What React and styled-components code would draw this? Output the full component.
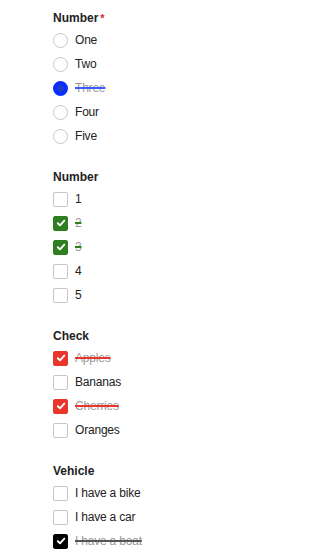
import React from 'react';
import styled, { createGlobalStyle } from 'styled-components';

const GlobalStyle = createGlobalStyle`
  body {
    margin: 0;
    background: #fff;
    font-family: "Liberation Sans", Arial, sans-serif;
    color: #222;
  }
`;

const Page = styled.div`
  padding: 10px 0 0 53px;
  display: flex;
  flex-direction: column;
  gap: 21px;
`;

const Group = styled.fieldset`
  border: none;
  margin: 0;
  padding: 0;
  display: flex;
  flex-direction: column;
`;

const Legend = styled.div`
  font-size: 12px;
  font-weight: 700;
  line-height: 16px;
  color: #222;
  margin-bottom: 2px;
  display: flex;
  align-items: flex-start;
  gap: 2px;
`;

const Required = styled.span`
  color: #e02424;
  font-size: 11px;
  font-weight: 700;
  line-height: 12px;
  margin-top: 2px;
`;

const Row = styled.label`
  height: 24px;
  display: flex;
  align-items: center;
  gap: 7px;
  font-size: 12px;
  letter-spacing: -0.2px;
  color: #222;
`;

const Text = styled.span`
  ${({ $strike, $line }) =>
    $strike &&
    `
    color: #999;
    text-decoration: line-through;
    text-decoration-color: ${$line};
    text-decoration-thickness: 1.5px;
  `}
`;

const Radio = styled.span`
  box-sizing: border-box;
  width: 15px;
  height: 15px;
  border-radius: 50%;
  flex: none;
  border: ${({ $on }) => ($on ? '4px solid #0a2dff' : '1px solid #c6c6c6')};
  background: ${({ $on }) => ($on ? '#1d3ccf' : '#fff')};
`;

const Box = styled.span`
  box-sizing: border-box;
  width: 15px;
  height: 15px;
  border-radius: 2px;
  flex: none;
  display: flex;
  align-items: center;
  justify-content: center;
  border: 1px solid ${({ $color }) => $color || '#c6c6c6'};
  background: ${({ $color }) => $color || '#fff'};
`;

const Tick = () => (
  <svg width="10" height="10" viewBox="0 0 10 10" fill="none">
    <path d="M1.8 5.2 L4 7.3 L8.3 2.6" stroke="#fff" strokeWidth="1.9" strokeLinecap="round" strokeLinejoin="round" />
  </svg>
);

const radios = ['One', 'Two', 'Three', 'Four', 'Five'];

const checkGroups = [
  { title: 'Number', color: '#2f7d1e', items: ['1', '2', '3', '4', '5'], on: ['2', '3'] },
  { title: 'Check', color: '#e8362d', items: ['Apples', 'Bananas', 'Cherries', 'Oranges'], on: ['Apples', 'Cherries'] },
  { title: 'Vehicle', color: '#000', items: ['I have a bike', 'I have a car', 'I have a boat'], on: ['I have a boat'] },
];

export default function App() {
  return (
    <>
      <GlobalStyle />
      <Page>
        <Group>
          <Legend>
            Number<Required>*</Required>
          </Legend>
          {radios.map((r) => {
            const on = r === 'Three';
            return (
              <Row key={r}>
                <Radio $on={on} />
                <Text $strike={on} $line="#3f5bff">{r}</Text>
              </Row>
            );
          })}
        </Group>

        {checkGroups.map((g) => (
          <Group key={g.title}>
            <Legend>{g.title}</Legend>
            {g.items.map((item) => {
              const on = g.on.includes(item);
              return (
                <Row key={item}>
                  <Box $color={on ? g.color : null}>{on && <Tick />}</Box>
                  <Text $strike={on} $line={g.color === '#000' ? '#555' : g.color}>{item}</Text>
                </Row>
              );
            })}
          </Group>
        ))}
      </Page>
    </>
  );
}
